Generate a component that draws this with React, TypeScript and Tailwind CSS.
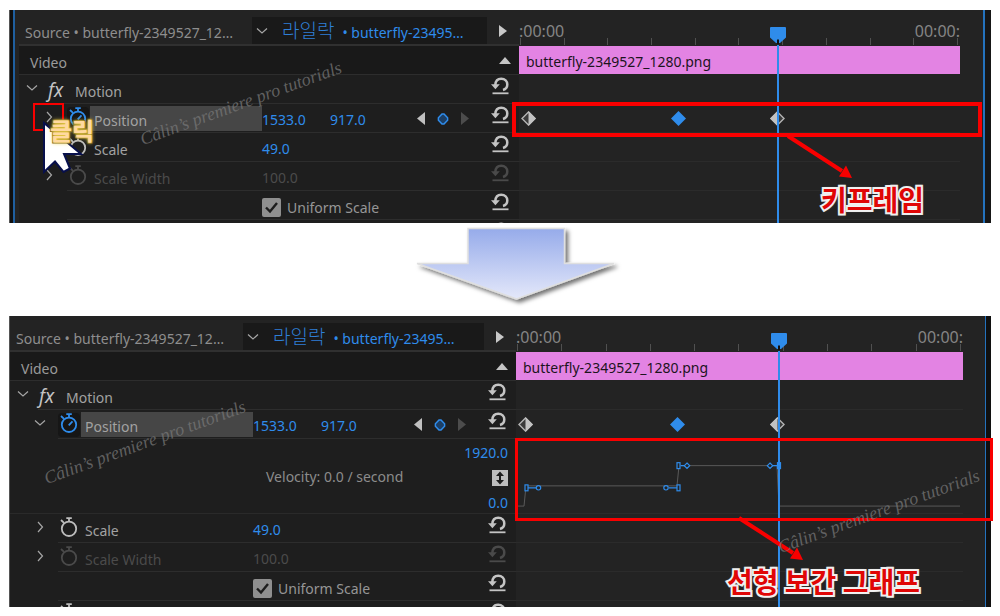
import type { ReactNode } from "react";

const SANS = "font-['Noto_Sans','Noto_Sans_CJK_KR',sans-serif]";

function Chevron({ open = false }: { open?: boolean }) {
  return (
    <svg width="12" height="12" viewBox="0 0 12 12" fill="none" stroke="#a6a6a6" strokeWidth="1.2">
      <path d={open ? "M1 3.5 L6 8 L11 3.5" : "M4 1 L8.5 6 L4 11"} />
    </svg>
  );
}

function Stopwatch({ color, hand = false }: { color: string; hand?: boolean }) {
  return (
    <svg width="18" height="20" viewBox="0 0 18 20" fill="none" stroke={color} strokeWidth="1.8">
      <circle cx="9" cy="11.8" r="7.2" />
      <path d="M6.3 1.2 H11.8 M9 1.2 V5 M1 3 L4 5.8" />
      {hand && <path d="M8.7 12.3 L12.5 8.3" />}
    </svg>
  );
}

function Reset({ color = "#c4c4c4" }: { color?: string }) {
  return (
    <svg width="18" height="18" viewBox="0 0 18 18" fill="none">
      <path d="M4.3 8 C4.6 4 7 1.8 10.2 1.8 C13.9 1.8 16.3 4.3 16.3 7.6 C16.3 10.4 14.6 12.3 12 13" stroke={color} strokeWidth="2.5" />
      <path d="M0 7.2 H8.8 L4.4 12.2 Z" fill={color} />
      <path d="M1.5 16.3 H17.5" stroke={color} strokeWidth="1.8" />
    </svg>
  );
}

function ResetButton({ disabled = false, name }: { disabled?: boolean; name: string }) {
  return (
    <button aria-label={`Reset ${name}`} disabled={disabled} className="mb-2 ml-auto mr-2.5 block shrink-0">
      <Reset color={disabled ? "#4a4a4a" : "#c4c4c4"} />
    </button>
  );
}

function Value({ children, dim = false, wide = false }: { children: string; dim?: boolean; wide?: boolean }) {
  return (
    <button disabled={dim} className={`pt-0.5 text-left ${wide ? "w-[68px]" : ""} ${dim ? "text-[#4b4b4b]" : "text-[#2f8ceb]"}`}>
      {children}
    </button>
  );
}

function Row({ label, children, inset = true }: { label: ReactNode; children: ReactNode; inset?: boolean }) {
  return (
    <div className="relative flex h-[29px]">
      <div className="flex w-[243px] shrink-0 items-center">{label}</div>
      <div className="flex min-w-0 flex-1 items-center">{children}</div>
      <div className={`absolute bottom-0 right-0 h-px bg-[#2d2d2d] ${inset ? "left-12" : "left-7"}`} />
    </div>
  );
}

function PropertyLabel({
  name,
  state = "idle",
  open = false,
}: {
  name: string;
  state?: "idle" | "active" | "disabled";
  open?: boolean;
}) {
  const color = state === "active" ? "#2f8ceb" : state === "disabled" ? "#4a4a4a" : "#bdbdbd";
  return (
    <>
      <button aria-label={`Expand ${name}`} className="mb-1 ml-6 w-3">
        <Chevron open={open} />
      </button>
      <button
        aria-label={`Toggle animation for ${name}`}
        className={`ml-3 flex h-6 w-[22px] shrink-0 items-start justify-center ${state === "active" ? "rounded-sm bg-[#161616]" : ""}`}
      >
        <Stopwatch color={color} hand={state === "active"} />
      </button>
      <span
        className={`ml-px flex-1 pl-1 leading-6 ${state === "active" ? "h-[25px] bg-[#464646] pt-[3px]" : "pt-1"} ${
          state === "disabled" ? "text-[#4b4b4b]" : "text-[#a2a2a2]"
        }`}
      >
        {name}
      </span>
    </>
  );
}

function Tabs() {
  return (
    <div className="flex h-[29px] items-stretch border-b-2 border-[#303030]">
      <button className="w-[233px] shrink-0 truncate bg-[#232323] pl-1.5 pt-1 text-left text-[#8e8e8e]">
        Source • butterfly-2349527_12…
      </button>
      <button className="flex min-w-0 flex-1 items-center whitespace-nowrap bg-[#191919] pl-1 text-[#2f7fd6]">
        <Chevron open />
        <span className="ml-3.5 font-['Noto_Sans_CJK_KR',sans-serif] text-[19px] font-light">라일락</span>
        <span className="ml-2 pt-1 text-[#2f8ceb]">• butterfly-23495…</span>
      </button>
      <button aria-label="Show timeline" className="flex w-8 shrink-0 items-center justify-center bg-[#232323]">
        <svg width="8" height="12" viewBox="0 0 8 12" fill="#c8c8c8">
          <path d="M0 0 L8 6 L0 12 Z" />
        </svg>
      </button>
    </div>
  );
}

function KeyframeNav() {
  return (
    <div className="ml-auto mr-[22px] flex items-center gap-3">
      <button aria-label="Previous keyframe">
        <svg width="8" height="13" viewBox="0 0 8 13" fill="#c0c0c0">
          <path d="M8 0 V13 L0 6.5 Z" />
        </svg>
      </button>
      <button aria-label="Add keyframe">
        <svg width="12" height="12" viewBox="0 0 12 12" fill="#1c3f66" stroke="#2f8ceb" strokeWidth="1.5">
          <path d="M5 1 H7 L10.6 4.8 V7.2 L7 11 H5 L1.4 7.2 V4.8 Z" />
        </svg>
      </button>
      <button aria-label="Next keyframe">
        <svg width="8" height="13" viewBox="0 0 8 13" fill="#4c4c4c">
          <path d="M0 0 V13 L8 6.5 Z" />
        </svg>
      </button>
    </div>
  );
}

function VelocityRow() {
  return (
    <div className="relative flex h-[75px] border-b border-[#2a2a2a] pl-[256px] pr-2">
      <span className="self-center whitespace-nowrap text-[#8c8c8c]">Velocity: 0.0 / second</span>
      <div className="ml-auto flex flex-col items-end justify-between pt-1">
        <span className="leading-5 text-[#2f8ceb]">1920.0</span>
        <button aria-label="Fit graph height" className="bg-[#bdbdbd]">
          <svg width="16" height="16" viewBox="0 0 16 16" fill="none" stroke="#1c1c1c" strokeWidth="2">
            <path d="M8 4 V12" />
            <path d="M4 6 L8 1.5 L12 6 Z M4 10 L8 14.5 L12 10 Z" fill="#1c1c1c" stroke="none" />
          </svg>
        </button>
        <span className="leading-5 text-[#2f8ceb]">0.0</span>
      </div>
    </div>
  );
}

function Properties({ id, expanded = false }: { id: string; expanded?: boolean }) {
  return (
    <div className="min-w-0 bg-[#1e1e1e]">
      <Tabs />
      <div className="flex h-[29px] items-center justify-between border-b border-[#2d2d2d] bg-[#191919] pl-[11px] pr-2 text-[#9a9a9a]">
        <span className="pt-1">Video</span>
        <button aria-label="Collapse video section">
          <svg width="12" height="7" viewBox="0 0 12 7" fill="#c4c4c4">
            <path d="M6 0 L12 7 H0 Z" />
          </svg>
        </button>
      </div>
      <Row
        inset={false}
        label={
          <>
            <button aria-label="Collapse Motion" className="mb-1 ml-[7px] w-3">
              <Chevron open />
            </button>
            <span className="ml-2.5 w-[27px] text-[19px] italic leading-6 text-[#c4c4c4]">fx</span>
            <span className="pt-1 text-[#a2a2a2]">Motion</span>
          </>
        }
      >
        <ResetButton name="Motion" />
      </Row>
      <Row label={<PropertyLabel name="Position" state="active" open={expanded} />}>
        <Value wide>1533.0</Value>
        <Value>917.0</Value>
        <KeyframeNav />
        <div>
          <ResetButton name="Position" />
        </div>
      </Row>
      {expanded && <VelocityRow />}
      <Row label={<PropertyLabel name="Scale" />}>
        <Value>49.0</Value>
        <ResetButton name="Scale" />
      </Row>
      <Row label={<PropertyLabel name="Scale Width" state="disabled" />}>
        <Value dim>100.0</Value>
        <ResetButton name="Scale Width" disabled />
      </Row>
      <Row label={null}>
        <div className="relative mt-1 h-[19px] w-[19px] shrink-0">
          <input id={id} type="checkbox" defaultChecked className="peer block h-full w-full appearance-none rounded-xs bg-[#8f8f8f]" />
          <svg
            className="pointer-events-none invisible absolute inset-0 peer-checked:visible"
            width="19"
            height="19"
            viewBox="0 0 19 19"
            fill="none"
            stroke="#1d1d1d"
            strokeWidth="2.4"
          >
            <path d="M4 9.5 L8 13.5 L15 5" />
          </svg>
        </div>
        <label htmlFor={id} className="pl-1.5 pt-1 text-[#969696]">
          Uniform Scale
        </label>
        <ResetButton name="Uniform Scale" />
      </Row>
      <div className={`flex items-start justify-between overflow-hidden pl-[50px] pr-2.5 pt-0.5 ${expanded ? "h-1.5" : "h-[3px]"}`}>
        {expanded ? <Stopwatch color="#bdbdbd" /> : <span />}
        <Reset />
      </div>
    </div>
  );
}

const keyframes = [
  { at: "left-[2%]", kind: "in" },
  { at: "left-[36%]", kind: "selected" },
  { at: "left-[58.4%]", kind: "out" },
] as const;

function Keyframe({ kind }: { kind: "in" | "selected" | "out" }) {
  if (kind === "selected") {
    return (
      <svg width="15" height="15" viewBox="0 0 15 15" fill="#2f8ceb">
        <path d="M7.5 0 L15 7.5 L7.5 15 L0 7.5 Z" />
      </svg>
    );
  }
  return (
    <svg width="15" height="15" viewBox="0 0 15 15">
      <path d="M7.5 1 L14 7.5 L7.5 14 L1 7.5 Z" fill="#3a3a3a" stroke="#b4b4b4" strokeWidth="1.4" />
      <path d={kind === "in" ? "M7.5 0 L15 7.5 L7.5 15 Z" : "M7.5 0 L0 7.5 L7.5 15 Z"} fill="#c2c2c2" />
    </svg>
  );
}

function VelocityGraph() {
  return (
    <svg className="block h-full w-full" viewBox="0 0 447 75" preserveAspectRatio="none" fill="none">
      <path d="M2 68 H8 L10 47.5 H161 L163 27 H261 L263 68 H444" stroke="#5a5a5a" strokeWidth="1" />
      <g stroke="#2f8ceb" strokeWidth="1.2" fill="#232323">
        <path d="M12 49.5 H20 M153 49.5 H161 M165 27 H169 M256 27 H262" />
        <rect x="9" y="46.5" width="3" height="6" />
        <circle cx="22.5" cy="49.5" r="2.2" />
        <circle cx="150" cy="49.5" r="2.2" />
        <rect x="161" y="46.5" width="3" height="6" />
        <rect x="161" y="24" width="3" height="6" />
        <path d="M171 24.3 L173.7 27 L171 29.7 L168.3 27 Z M254 24.3 L256.7 27 L254 29.7 L251.3 27 Z" />
        <rect x="261.5" y="24" width="3" height="6" fill="#2f8ceb" />
      </g>
    </svg>
  );
}

function Timeline({ expanded = false, children }: { expanded?: boolean; children: ReactNode }) {
  const line = "h-[29px] border-b border-[#2b2b2b]";
  return (
    <div className="relative min-w-0 bg-[#232323]">
      <div className="relative flex h-[29px] flex-col justify-between text-[16px] leading-5 text-[#858585]">
        <div className="-mb-2 flex justify-between pt-1">
          <span>:00:00</span>
          <span>00:00:</span>
        </div>
        <div className="flex justify-between pb-px pl-px pr-0.5">
          {Array.from({ length: 11 }, (_, i) => (
            <span key={i} className="h-[7px] w-px bg-[#505050]" />
          ))}
        </div>
      </div>
      <div className="h-7 truncate bg-[#e383e3] pl-[7px] pt-1 leading-6 text-[#1d141d]">butterfly-2349527_1280.png</div>
      <div className="h-[30px] border-b border-[#2b2b2b]" />
      <div className={`relative ${line}`}>
        {keyframes.map((k) => (
          <button key={k.at} aria-label="Keyframe" className={`absolute top-[7px] -ml-[7px] ${k.at}`}>
            <Keyframe kind={k.kind} />
          </button>
        ))}
      </div>
      {expanded && (
        <div className="h-[75px] border-b border-[#2b2b2b]">
          <VelocityGraph />
        </div>
      )}
      <div className={line} />
      <div className={line} />
      <div className={line} />
      <div className="absolute bottom-0 left-[58.6%] top-7 w-0.5 bg-[#2f8ceb]" />
      <svg className="absolute left-[58.6%] top-2.5 -ml-[7px]" width="16" height="17" viewBox="0 0 16 17">
        <path d="M0 1 Q0 0 1 0 H15 Q16 0 16 1 V10.5 L10 16 H6 L0 10.5 Z" fill="#2f8ceb" />
        <path d="M8 12.5 V17" stroke="#111" strokeWidth="2" />
      </svg>
      {children}
    </div>
  );
}

function Watermark({ place }: { place: string }) {
  return (
    <span
      aria-hidden="true"
      className={`pointer-events-none absolute origin-bottom-left -rotate-20 whitespace-nowrap font-['Liberation_Serif',serif] text-[18px] italic leading-5 text-[#777777]/75 ${place}`}
    >
      Câlin’s premiere pro tutorials
    </span>
  );
}

function CalloutArrow({ place }: { place: string }) {
  return (
    <svg className={`absolute ${place}`} width="68" height="48" viewBox="0 0 68 48" fill="#f90000">
      <path d="M2 2 L56 37" stroke="#f90000" strokeWidth="4" />
      <path d="M66 44 L53 42.5 L60 31.5 Z" />
    </svg>
  );
}

function Callout({ place, children }: { place: string; children: string }) {
  return (
    <span
      className={`absolute whitespace-nowrap font-['Noto_Sans_CJK_KR',sans-serif] text-[28px] font-bold leading-9 text-[#e00606] [-webkit-text-stroke:4px_#ececec] [paint-order:stroke_fill] [text-shadow:0_0_3px_#fff] ${place}`}
    >
      {children}
    </span>
  );
}

function ClickHint() {
  return (
    <>
      <div className="absolute left-[23px] top-[93px] h-7 w-[31px] border-2 border-[#f90000]" />
      <svg className="absolute left-8 top-[110px]" width="46" height="58" viewBox="0 0 46 58">
        <path d="M2 3 V52 L13 41.5 L21.5 52 L28 48.5 L22 34 H39 Z" fill="#fff" stroke="#08104c" strokeWidth="2" />
      </svg>
      <span className="absolute left-10 top-[104px] font-['Noto_Sans_CJK_KR',sans-serif] text-[24px] font-bold leading-8 text-[#ffd9a0] [-webkit-text-stroke:2px_#5c4a1a] [paint-order:stroke_fill] [text-shadow:0_0_2px_#ffe14f,0_0_4px_#e8c940]">
        클릭
      </span>
    </>
  );
}

export default function App() {
  return (
    <main className={`bg-white px-[9px] pb-2 pt-[10px] text-[14px] ${SANS}`}>
      <section className="relative grid grid-cols-[500px_1fr] border-l border-[#555555] bg-[#232323] pl-[9px] pr-[31px] pt-[7px]">
        <div className="absolute inset-y-0 left-0 w-[3px] bg-[#101010]" />
        <div className="absolute inset-y-0 left-[3px] w-0.5 bg-[#1f5f9f]" />
        <div className="absolute inset-y-0 right-0 w-2 border-l-2 border-[#2472bd] bg-[#161616]" />
        <Properties id="uniform-scale-collapsed" />
        <Timeline>
          <div className="absolute -left-[7px] -right-[22px] top-[85px] h-[35px] border-4 border-[#f90000]" />
          <CalloutArrow place="left-[60.5%] top-[117px]" />
          <Callout place="left-[68.5%] top-[164px]">키프레임</Callout>
        </Timeline>
        <Watermark place="left-[134px] top-[119px]" />
        <ClickHint />
      </section>

      <div className="flex h-[93px] justify-center pl-[34px] pt-1">
        <svg width="212" height="84" viewBox="0 0 212 84">
          <defs>
            <linearGradient id="step-fill" x1="0" y1="0" x2="0" y2="1">
              <stop offset="0" stopColor="#96abea" />
              <stop offset="1" stopColor="#e4e8fa" />
            </linearGradient>
            <filter id="step-shadow" x="-10%" y="-10%" width="120%" height="130%">
              <feDropShadow dx="3" dy="3" stdDeviation="2" floodColor="#000" floodOpacity="0.55" />
            </filter>
          </defs>
          <path
            d="M57 1.5 H153.5 V36.5 H203 L105.5 72 L6 36.5 H57 Z"
            fill="url(#step-fill)"
            stroke="#dfdfdf"
            strokeWidth="1.5"
            filter="url(#step-shadow)"
          />
        </svg>
      </div>

      <section className="relative grid grid-cols-[506px_1fr] border-l border-[#555555] bg-[#232323] pr-7 pt-[7px]">
        <div className="absolute inset-y-0 right-0 w-1.5 border-l border-[#2472bd] bg-[#101010]" />
        <Properties id="uniform-scale-expanded" expanded />
        <Timeline expanded>
          <div className="absolute -left-px -right-[30px] top-[115px] h-[83px] border-3 border-[#f90000]" />
          <CalloutArrow place="left-[49.5%] top-[193px]" />
          <Watermark place="left-[59.6%] top-[214px]" />
          <Callout place="left-[47.2%] top-[240px]">선형 보간 그래프</Callout>
        </Timeline>
        <Watermark place="left-[38px] top-[152px]" />
      </section>
    </main>
  );
}
